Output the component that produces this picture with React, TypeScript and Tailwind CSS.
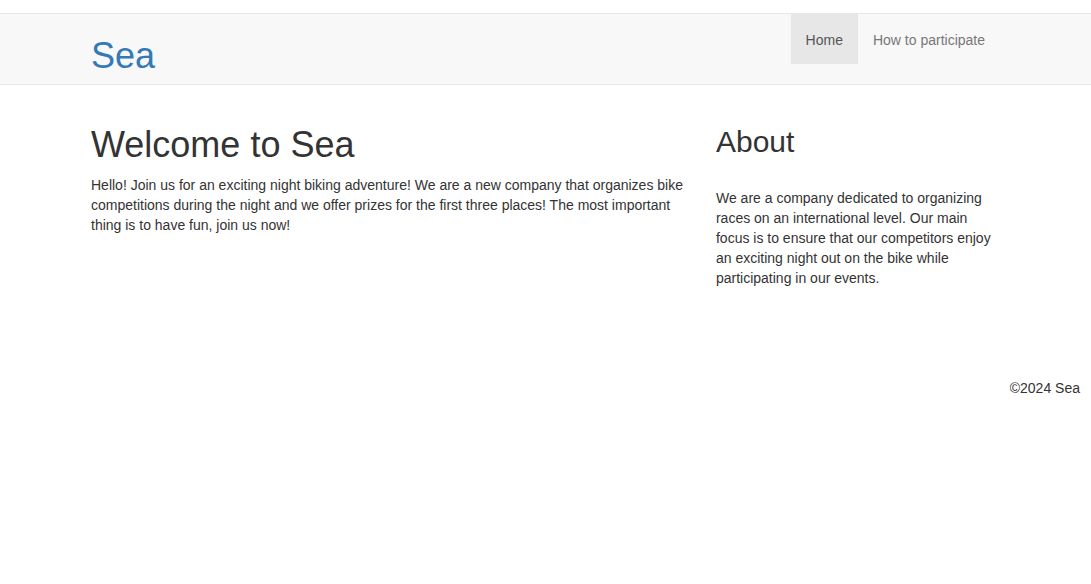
import React from "react";

const App = () => {
  return (
    <div className="min-h-[584px] bg-white text-[14px] leading-[20px] text-[#333] font-['Liberation_Sans',Arial,sans-serif]">
      <div className="h-[13px]" />
      <nav className="h-[72px] border-y border-[#e7e7e7] bg-[#f8f8f8]">
        <div className="mx-auto flex w-[909px] justify-between">
          <a href="#" className="pt-[22px] text-[36px] leading-[40px] text-[#337ab7]">
            Sea
          </a>
          <ul className="flex">
            <li>
              <a href="#" className="block h-[50px] bg-[#e7e7e7] px-[15px] pt-[16px] text-[#555]">
                Home
              </a>
            </li>
            <li>
              <a href="#" className="block h-[50px] px-[15px] pt-[16px] text-[#777]">
                How to participate
              </a>
            </li>
          </ul>
        </div>
      </nav>

      <main className="mx-auto mt-[40px] flex w-[909px]">
        <section className="w-[605px]">
          <h1 className="mb-[10px] text-[36px] leading-[40px]">Welcome to Sea</h1>
          <p>
            Hello! Join us for an exciting night biking adventure! We are a new company that
            organizes bike competitions during the night and we offer prizes for the first three
            places! The most important thing is to have fun, join us now!
          </p>
        </section>
        <section className="ml-[22px] w-[285px]">
          <h2 className="text-[30px] leading-[33px]">About</h2>
          <p className="mt-[30px]">
            We are a company dedicated to organizing races on an international level. Our main
            focus is to ensure that our competitors enjoy an exciting night out on the bike while
            participating in our events.
          </p>
        </section>
      </main>

      <footer className="mt-[90px] pr-[11px] text-right">©2024 Sea</footer>
    </div>
  );
};

export default App;
